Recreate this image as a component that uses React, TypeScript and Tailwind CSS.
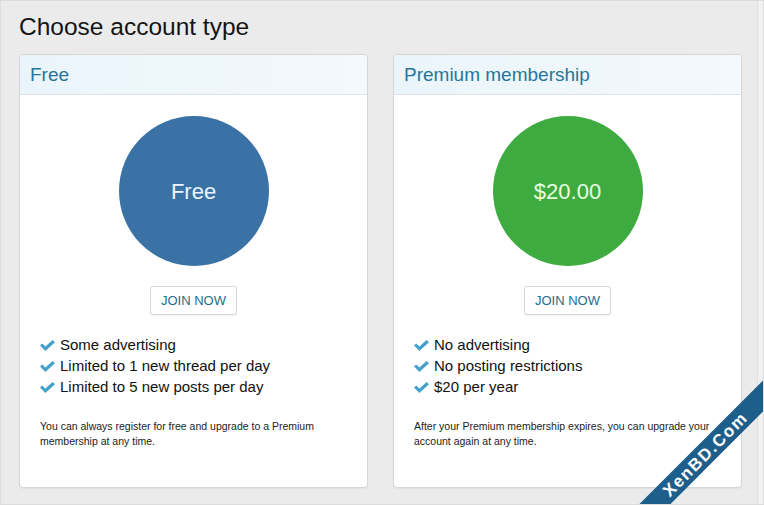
import React from "react";

type Plan = {
  title: string;
  price: string;
  circle: string;
  priceColor: string;
  perks: string[];
  note: string;
};

const plans: Plan[] = [
  {
    title: "Free",
    price: "Free",
    circle: "bg-[#3b72a6]",
    priceColor: "text-[#eef4fb]",
    perks: ["Some advertising", "Limited to 1 new thread per day", "Limited to 5 new posts per day"],
    note: "You can always register for free and upgrade to a Premium membership at any time.",
  },
  {
    title: "Premium membership",
    price: "$20.00",
    circle: "bg-[#3dab3f]",
    priceColor: "text-[#eaffe2]",
    perks: ["No advertising", "No posting restrictions", "$20 per year"],
    note: "After your Premium membership expires, you can upgrade your account again at any time.",
  },
];

const Check = () => (
  <svg width="15" height="11" viewBox="0 0 15 11" className="shrink-0">
    <polygon points="0,5.6 2.2,3.4 5.4,6.6 12.6,0 15,2.2 5.4,11" fill="#45a1cb" />
  </svg>
);

const PlanCard = ({ plan }: { plan: Plan }) => {
  return (
    <div className="w-[349px] h-[434px] bg-white border border-[#d6d6d6] rounded-[4px] shadow-[0_1px_1px_rgba(0,0,0,0.04)] overflow-hidden flex flex-col">
      <div className="h-[40px] shrink-0 flex items-center pl-[10px] bg-gradient-to-r from-[#eaf5fb] to-[#f3f9fc] border-b border-[#dde5ea]">
        <h2 className="text-[19px] text-[#277699] leading-none">{plan.title}</h2>
      </div>
      <div className="flex flex-col items-center">
        <div
          className={`mt-[21px] w-[150px] h-[150px] rounded-full flex items-center justify-center ${plan.circle}`}
        >
          <span className={`text-[22px] ${plan.priceColor}`}>{plan.price}</span>
        </div>
        <button className="mt-[20px] h-[29px] px-[10px] border border-[#d3d8db] rounded-[3px] bg-white text-[13px] text-[#1f6c8c] uppercase shadow-[0_1px_1px_rgba(0,0,0,0.05)]">
          Join now
        </button>
      </div>
      <ul className="mt-[20px] pl-[20px] flex flex-col">
        {plan.perks.map((p) => (
          <li key={p} className="flex items-center gap-[5px] h-[21px] text-[15px] text-[#111]">
            <Check />
            <span>{p}</span>
          </li>
        ))}
      </ul>
      <p className="mt-[21px] px-[20px] text-[10.5px] leading-[14.5px] text-[#222]">{plan.note}</p>
    </div>
  );
};

export default function App() {
  return (
    <div
      className="relative w-[764px] h-[505px] overflow-hidden bg-[#ebebeb] flex border border-[#dcdcdc]"
      style={{ fontFamily: '"Liberation Sans", Arial, sans-serif' }}
    >
      <main className="flex-1 pl-[18px] pt-[12px]">
        <h1 className="text-[24.5px] leading-[28px] text-[#141414]">Choose account type</h1>
        <div className="mt-[13px] flex gap-[25px]">
          {plans.map((plan) => (
            <PlanCard key={plan.title} plan={plan} />
          ))}
        </div>
      </main>
      <div className="w-[6px] shrink-0 bg-[#f1f1f1] border-l border-[#e0e0e0]" />

      {/* watermark ribbon */}
      <div className="absolute left-[572px] top-[442px] w-[264px] h-[22px] bg-[#1d5e8a] -rotate-45 flex items-center justify-center">
        <span className="text-white font-bold text-[17px] tracking-[1.5px] leading-none">XenBD.Com</span>
      </div>
    </div>
  );
}
